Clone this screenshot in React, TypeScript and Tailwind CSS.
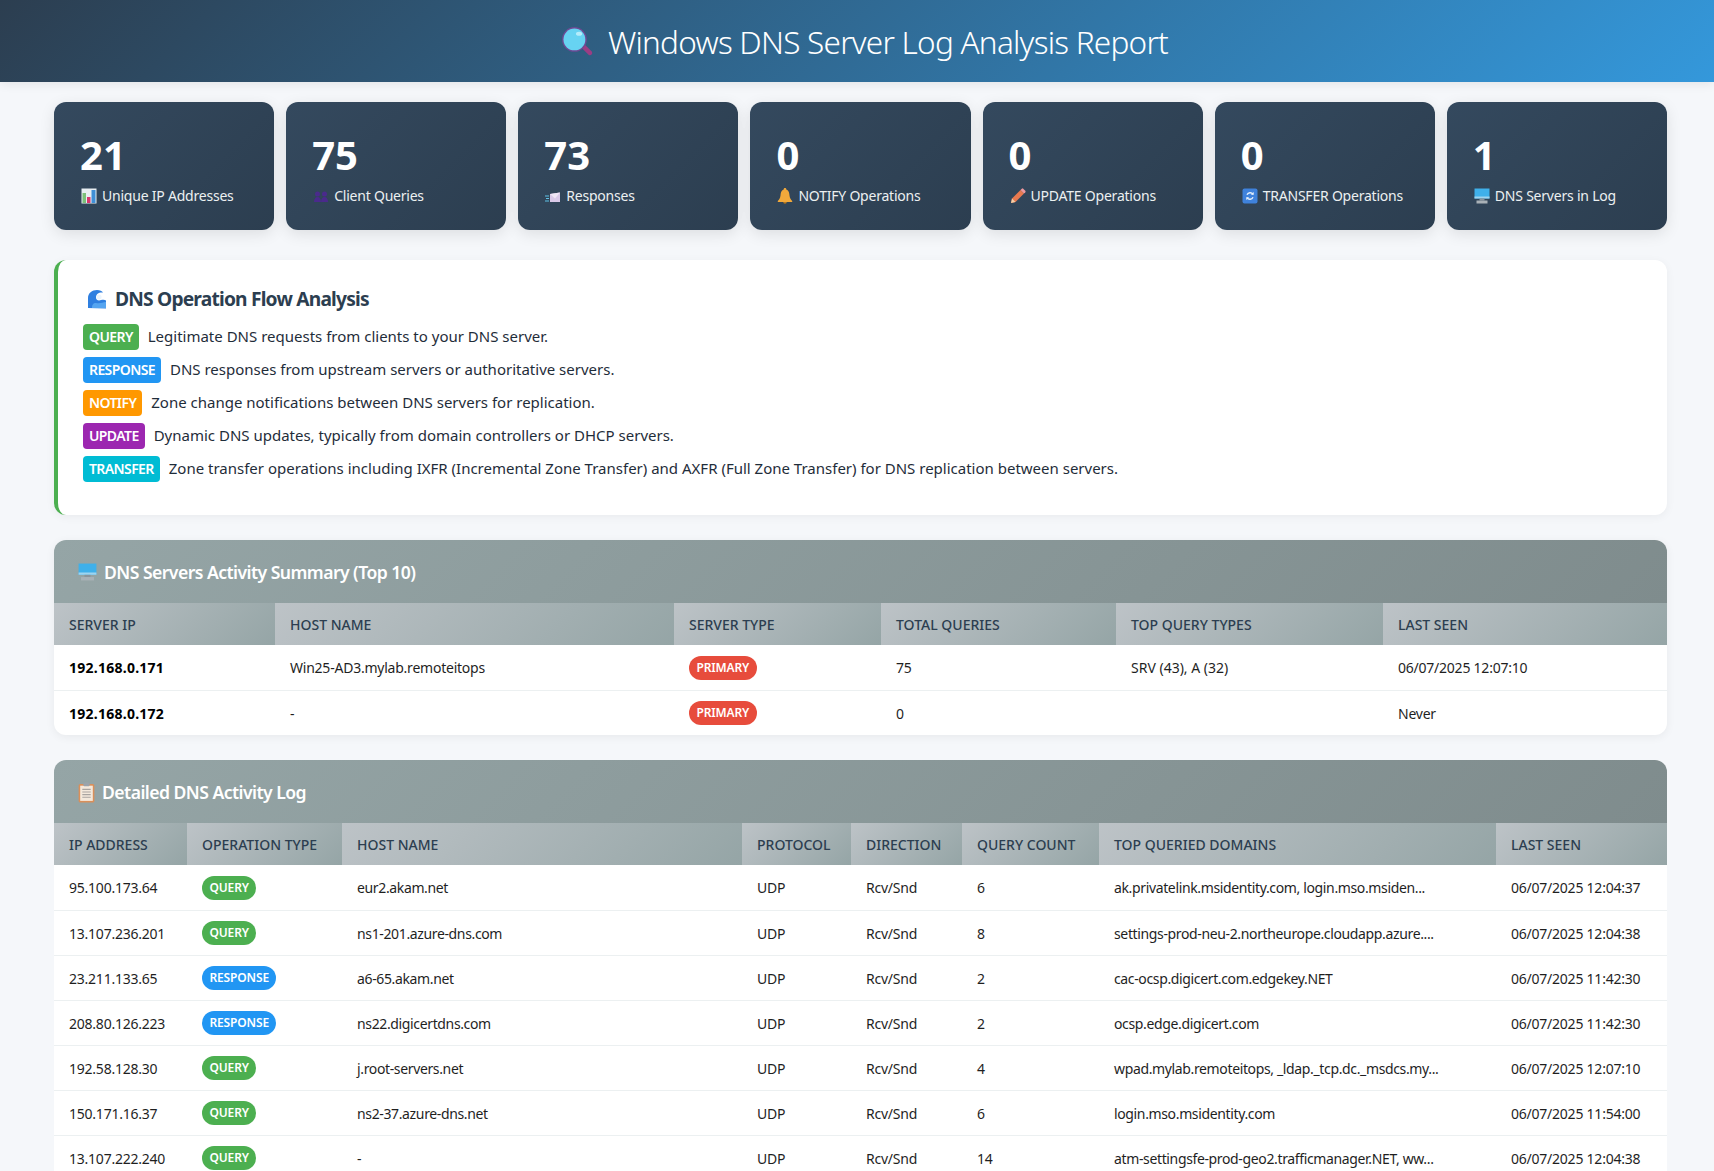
import React from 'react';

const font = "font-['Noto_Sans','Open_Sans',sans-serif]";

function Magnifier({ className }: { className?: string }) {
  return (
    <svg viewBox="0 0 32 32" className={className}>
      <path d="M19 20l3-3 8 8a2.2 2.2 0 0 1-3 3z" fill="#9c3d84" />
      <circle cx="13" cy="13" r="12" fill="#6d4a94" />
      <circle cx="13" cy="13" r="10.6" fill="#67d3f2" />
      <ellipse cx="17.5" cy="7.5" rx="3" ry="2" fill="#b5ecfa" />
    </svg>
  );
}

const statIcon = 'w-[16px] h-[16px] shrink-0 ml-[1px]';

function ChartIcon() {
  return (
    <svg viewBox="0 0 16 16" className={statIcon}>
      <rect x="0.5" y="0.5" width="15" height="15" fill="#e8eef2" />
      <rect x="1.5" y="5" width="3.5" height="10" fill="#7cc07a" />
      <rect x="6" y="9" width="3.5" height="6" fill="#d9376e" />
      <rect x="10.5" y="2" width="4" height="13" fill="#3f8fd6" />
    </svg>
  );
}

function BustsIcon() {
  return (
    <svg viewBox="0 0 16 16" className={statIcon}>
      <g fill="#4a2a8c">
        <circle cx="4.5" cy="6" r="2.5" />
        <circle cx="11.5" cy="6" r="2.5" />
        <path d="M1 14c0-3 1.5-5 3.5-5S8 11 8 14z" />
        <path d="M8 14c0-3 1.5-5 3.5-5s3.5 2 3.5 5z" />
      </g>
    </svg>
  );
}

function EnvelopeIcon() {
  return (
    <svg viewBox="0 0 16 16" className={statIcon}>
      <path d="M5 6l10-1.5V14H5z" fill="#d9c9e8" />
      <path d="M5 6l5 4.5L15 4.5" fill="#efe6f5" />
      <path d="M0 8h4M1 10.5h3M0 13h4" stroke="#5fc2e6" strokeWidth="1" />
    </svg>
  );
}

function BellIcon() {
  return (
    <svg viewBox="0 0 16 16" className={statIcon}>
      <circle cx="8" cy="14" r="1.8" fill="#b97a1d" />
      <path d="M8 0c-1 0-1.300.7-1.300 1.400C4 2.400 3.700 4.800 3.500 7.500 3.300 10 2 12 .8 13v1h14.400v-1C14 12 12.700 10 12.500 7.500 12.300 4.800 12 2.400 9.300 1.400 9.300.7 9 0 8 0z" fill="#f2a93b" />
    </svg>
  );
}

function PencilIcon() {
  return (
    <svg viewBox="0 0 16 16" className={statIcon}>
      <path d="M1 15l1-4.5L10.5 2l3.5 3.5L5.5 14z" fill="#e8794f" />
      <path d="M10.5 2l1.3-1.3a1 1 0 0 1 1.4 0l2.1 2.1a1 1 0 0 1 0 1.4L14 5.5z" fill="#ef9aa0" />
      <path d="M1 15l1-4.5L5.5 14z" fill="#f4d0a8" />
    </svg>
  );
}

function RefreshIcon() {
  return (
    <svg viewBox="0 0 16 16" className={statIcon}>
      <rect x="0.5" y="0.5" width="15" height="15" rx="2" fill="#3f82dc" />
      <path d="M11 6.2A3.5 3.5 0 0 0 5 6.8M5 9.8a3.5 3.5 0 0 0 6-.6" fill="none" stroke="#e6f0fb" strokeWidth="1.4" />
      <path d="M11.800 4l-.2 3-2.800-.4zM4.200 12l.2-3 2.800.4z" fill="#e6f0fb" />
    </svg>
  );
}

function ComputerIcon({ className = statIcon }: { className?: string }) {
  return (
    <svg viewBox="0 0 16 16" preserveAspectRatio="none" className={`${className} shrink-0`}>
      <rect x="0.5" y="0.5" width="15" height="10" fill="#3fb0ea" />
      <path d="M0.5 8.500h15v2h-15z" fill="#9fd4ef" />
      <rect x="5.500" y="10.500" width="5" height="2" fill="#8a949c" />
      <rect x="2.500" y="12.500" width="11" height="3" fill="#a9b1b7" />
    </svg>
  );
}

function WaveIcon() {
  return (
    <svg viewBox="0 0 20 20" className="w-[20px] h-[20px] shrink-0">
      <path d="M1 19V9C1 4 5 1 10 1c3 0 5 1 6 2.5-4-.5-7 1.500-7 5 0 3 3 3.500 5 2.500 2-.5 4-.5 5 .5v8z" fill="#2f7fe0" />
      <path d="M5 19c0-3 1-5 4-5 4 1 7-1 10-1v6z" fill="#56a5f0" />
      <circle cx="12" cy="8" r="2.600" fill="#eaf4fd" />
    </svg>
  );
}

function ClipboardIcon() {
  return (
    <svg viewBox="0 0 16 20" className="w-[17px] h-[21px] shrink-0">
      <rect x="0.5" y="2" width="15" height="17.500" rx="1.500" fill="#d98f5a" />
      <rect x="2" y="3.500" width="12" height="14.500" fill="#f4e9dc" />
      <rect x="5" y="0.500" width="6" height="3.500" rx="1" fill="#9aa3ab" />
      <path d="M4 7h8M4 9.500h8M4 12h8M4 14.500h8" stroke="#a9a4a0" strokeWidth="1" />
    </svg>
  );
}

const stats = [
  { value: '21', label: 'Unique IP Addresses', icon: <ChartIcon /> },
  { value: '75', label: 'Client Queries', icon: <BustsIcon /> },
  { value: '73', label: 'Responses', icon: <EnvelopeIcon /> },
  { value: '0', label: 'NOTIFY Operations', icon: <BellIcon /> },
  { value: '0', label: 'UPDATE Operations', icon: <PencilIcon /> },
  { value: '0', label: 'TRANSFER Operations', icon: <RefreshIcon /> },
  { value: '1', label: 'DNS Servers in Log', icon: <ComputerIcon /> },
];

const flowRows = [
  { tag: 'QUERY', color: 'bg-[#4caf50]', text: 'Legitimate DNS requests from clients to your DNS server.' },
  { tag: 'RESPONSE', color: 'bg-[#2196f3]', text: 'DNS responses from upstream servers or authoritative servers.' },
  { tag: 'NOTIFY', color: 'bg-[#ff9800]', text: 'Zone change notifications between DNS servers for replication.' },
  { tag: 'UPDATE', color: 'bg-[#9c27b0]', text: 'Dynamic DNS updates, typically from domain controllers or DHCP servers.' },
  { tag: 'TRANSFER', color: 'bg-[#00bcd4]', text: 'Zone transfer operations including IXFR (Incremental Zone Transfer) and AXFR (Full Zone Transfer) for DNS replication between servers.' },
];

const activity = [
  ['95.100.173.64', 'QUERY', 'eur2.akam.net', '6', 'ak.privatelink.msidentity.com, login.mso.msiden...', '06/07/2025 12:04:37'],
  ['13.107.236.201', 'QUERY', 'ns1-201.azure-dns.com', '8', 'settings-prod-neu-2.northeurope.cloudapp.azure....', '06/07/2025 12:04:38'],
  ['23.211.133.65', 'RESPONSE', 'a6-65.akam.net', '2', 'cac-ocsp.digicert.com.edgekey.NET', '06/07/2025 11:42:30'],
  ['208.80.126.223', 'RESPONSE', 'ns22.digicertdns.com', '2', 'ocsp.edge.digicert.com', '06/07/2025 11:42:30'],
  ['192.58.128.30', 'QUERY', 'j.root-servers.net', '4', 'wpad.mylab.remoteitops, _ldap._tcp.dc._msdcs.my...', '06/07/2025 12:07:10'],
  ['150.171.16.37', 'QUERY', 'ns2-37.azure-dns.net', '6', 'login.mso.msidentity.com', '06/07/2025 11:54:00'],
  ['13.107.222.240', 'QUERY', '-', '14', 'atm-settingsfe-prod-geo2.trafficmanager.NET, ww...', '06/07/2025 12:04:38'],
];

function Pill({ label, color }: { label: string; color: string }) {
  return (
    <span className={`inline-block h-[24px] leading-[24px] px-[7.5px] rounded-[12px] text-white text-[12px] font-semibold tracking-[-0.15px] ${color}`}>
      {label}
    </span>
  );
}

const thClass = 'h-[42px] px-[15px] text-left font-medium text-[14px] uppercase text-[#2c3e50] bg-linear-[135deg,#bdc3c7,#95a5a6]';
const tdBase = 'h-[45px] px-[15px] pt-[1px] text-[14px] whitespace-nowrap overflow-hidden';
const tdClass = `${tdBase} tracking-[-0.23px] text-[#1f1f1f]`;
const tdTight = `${tdBase} tracking-[-0.36px] text-[#1f1f1f]`;
const tdBold = `${tdBase} tracking-[0.25px] font-bold text-black`;

function SectionTitle({ icon, children }: { icon: React.ReactNode; children: React.ReactNode }) {
  return (
    <div className="h-[63px] px-[24px] pt-[1px] flex items-center gap-[7px] bg-linear-[135deg,#95a5a6,#7f8c8d] text-white text-[17.600px] font-semibold tracking-[-0.55px]">
      {icon}
      <span>{children}</span>
    </div>
  );
}

export default function App() {
  return (
    <div className={`h-[1171px] overflow-hidden bg-[#f5f7fa] ${font}`}>
      {/* Header */}
      <header className="h-[82px] pt-[2px] flex items-center justify-center gap-[14px] pl-[15px] bg-linear-[135deg,#2c3e50,#3498db] shadow-[0_2px_10px_rgba(0,0,0,0.08)]">
        <Magnifier className="w-[33px] h-[33px]" />
        <h1 className="text-[31.500px] font-light text-white tracking-[-0.75px]">Windows DNS Server Log Analysis Report</h1>
      </header>

      <main className="pl-[54px] pr-[47px] pt-[20px]">
        {/* Stat cards */}
        <div className="grid grid-cols-7 gap-[12px]">
          {stats.map((s) => (
            <div key={s.label} className="h-[128px] rounded-[12px] px-[26px] pt-[31px] bg-linear-[135deg,#34495e,#2c3e50] shadow-[0_4px_15px_rgba(0,0,0,0.1)] text-white">
              <div className="text-[40px] leading-[44px] font-bold">{s.value}</div>
              <div className="mt-[8px] flex items-center gap-[5px] text-[14px] tracking-[-0.22px] text-[#ecf0f1]">
                {s.icon}
                <span className="whitespace-nowrap">{s.label}</span>
              </div>
            </div>
          ))}
        </div>

        {/* Flow analysis */}
        <section className="mt-[30px] h-[255px] bg-white rounded-[12px] border-l-[4px] border-[#4caf50] pl-[25px] pt-[26px] shadow-[0_2px_10px_rgba(0,0,0,0.05)]">
          <h3 className="flex items-center gap-[8px] pl-[4px] text-[19.200px] leading-[26px] font-bold tracking-[-0.8px] text-[#2c3e50]">
            <WaveIcon />
            DNS Operation Flow Analysis
          </h3>
          <div className="mt-[8px] flex flex-col">
            {flowRows.map((r) => (
              <div key={r.tag} className="h-[33px] flex items-center gap-[9px] text-[15px] text-[#1f2d3a]">
                <span className={`h-[26px] leading-[26px] px-[6px] rounded-[4px] text-white text-[14px] font-semibold tracking-[-0.6px] ${r.color}`}>{r.tag}</span>
                <span>{r.text}</span>
              </div>
            ))}
          </div>
        </section>

        {/* Servers */}
        <section className="mt-[25px] bg-white rounded-[12px] overflow-hidden shadow-[0_2px_10px_rgba(0,0,0,0.06)]">
          <SectionTitle icon={<ComputerIcon className="w-[19px] h-[18px]" />}>DNS Servers Activity Summary (Top 10)</SectionTitle>
          <table className="w-full table-fixed border-collapse">
            <thead>
              <tr>
                <th className={`${thClass} w-[221px]`}>Server IP</th>
                <th className={`${thClass} w-[399px]`}>Host Name</th>
                <th className={`${thClass} w-[207px]`}>Server Type</th>
                <th className={`${thClass} w-[235px]`}>Total Queries</th>
                <th className={`${thClass} w-[267px]`}>Top Query Types</th>
                <th className={thClass}>Last Seen</th>
              </tr>
            </thead>
            <tbody>
              <tr className="border-b border-[#ecf0f1]">
                <td className={tdBold}>192.168.0.171</td>
                <td className={tdClass}>Win25-AD3.mylab.remoteitops</td>
                <td className={tdClass}><Pill label="PRIMARY" color="bg-[#e74c3c]" /></td>
                <td className={tdClass}>75</td>
                <td className={`${tdBase} text-[#1f1f1f]`}>SRV (43), A (32)</td>
                <td className={tdClass}>06/07/2025 12:07:10</td>
              </tr>
              <tr>
                <td className={tdBold}>192.168.0.172</td>
                <td className={tdClass}>-</td>
                <td className={tdClass}><Pill label="PRIMARY" color="bg-[#e74c3c]" /></td>
                <td className={tdClass}>0</td>
                <td className={tdClass}></td>
                <td className={tdClass}>Never</td>
              </tr>
            </tbody>
          </table>
        </section>

        {/* Detailed log */}
        <section className="mt-[25px] bg-white rounded-t-[12px] overflow-hidden">
          <SectionTitle icon={<ClipboardIcon />}>Detailed DNS Activity Log</SectionTitle>
          <table className="w-full table-fixed border-collapse">
            <thead>
              <tr>
                <th className={`${thClass} w-[133px]`}>IP Address</th>
                <th className={`${thClass} w-[155px]`}>Operation Type</th>
                <th className={`${thClass} w-[400px]`}>Host Name</th>
                <th className={`${thClass} w-[109px]`}>Protocol</th>
                <th className={`${thClass} w-[111px]`}>Direction</th>
                <th className={`${thClass} w-[137px]`}>Query Count</th>
                <th className={`${thClass} w-[397px]`}>Top Queried Domains</th>
                <th className={thClass}>Last Seen</th>
              </tr>
            </thead>
            <tbody>
              {activity.map((row) => (
                <tr key={row[0]} className="border-b border-[#ecf0f1]">
                  <td className={tdClass}>{row[0]}</td>
                  <td className={tdClass}>
                    <Pill label={row[1]} color={row[1] === 'QUERY' ? 'bg-[#4caf50]' : 'bg-[#2196f3]'} />
                  </td>
                  <td className={tdTight}>{row[2]}</td>
                  <td className={tdClass}>UDP</td>
                  <td className={tdClass}>Rcv/Snd</td>
                  <td className={tdClass}>{row[3]}</td>
                  <td className={tdTight}>{row[4]}</td>
                  <td className={tdClass}>{row[5]}</td>
                </tr>
              ))}
            </tbody>
          </table>
        </section>
      </main>
    </div>
  );
}
